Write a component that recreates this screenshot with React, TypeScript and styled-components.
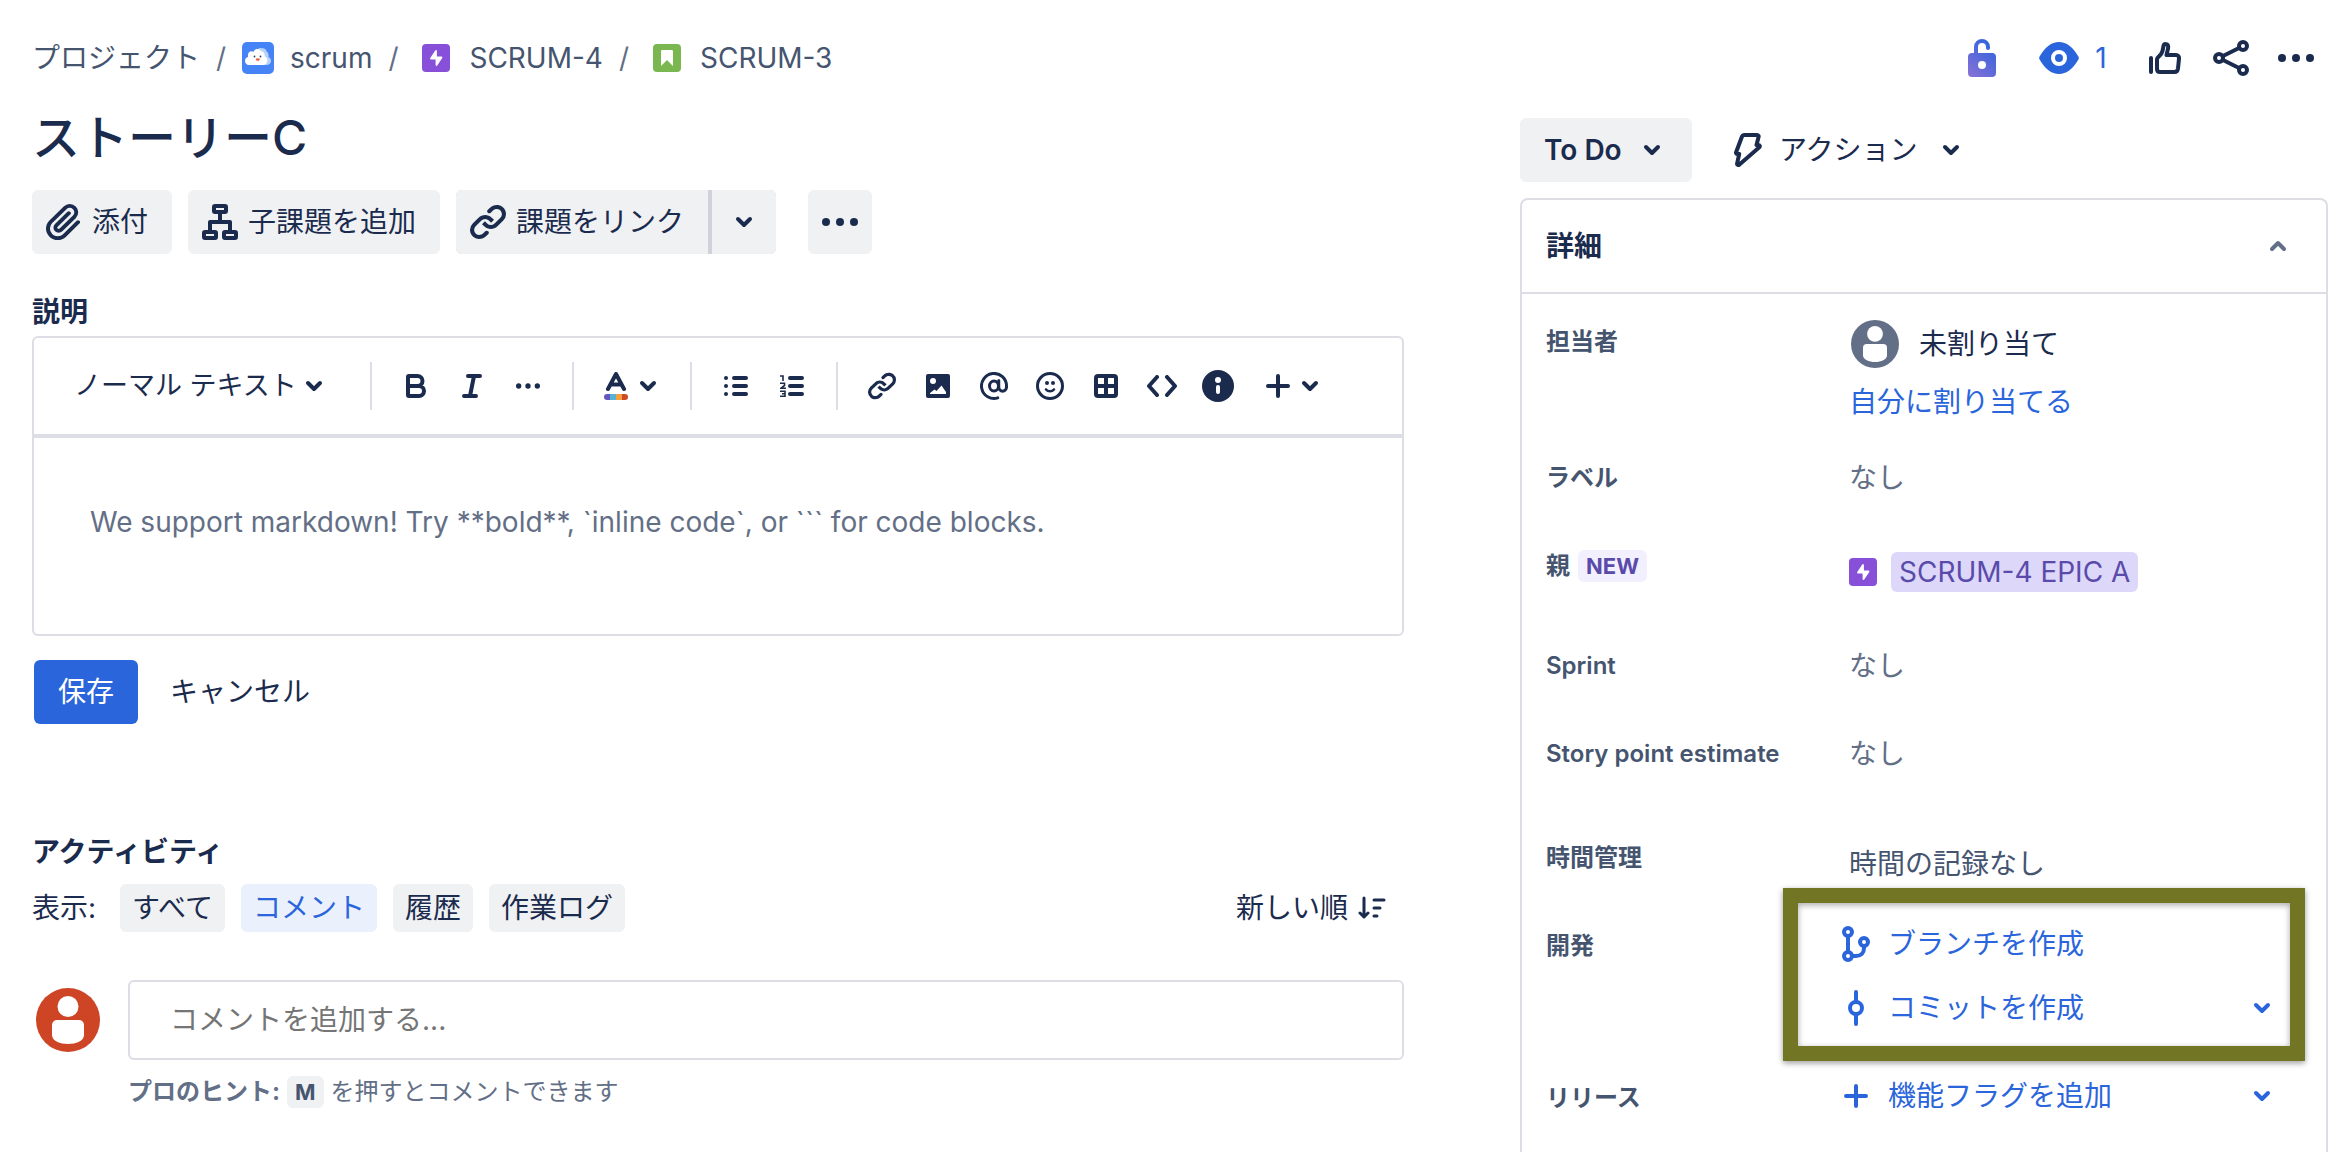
import React from "react";
import styled, { createGlobalStyle, css } from "styled-components";

const c = {
  navy: "#1b2b4e",
  slate: "#46556f",
  subtle: "#636f86",
  blue: "#2b65dc",
  blueSoft: "#eaf1fd",
  gray: "#f0f1f3",
  line: "#dddee5",
  purple: "#8850d8",
  olive: "#717524",
};

const Global = createGlobalStyle`
  *, *::before, *::after { box-sizing: border-box; }
  body {
    margin: 0;
    background: #fff;
    color: ${c.navy};
    font-family: Inter, "Noto Sans CJK JP", sans-serif;
    font-size: 28px;
    line-height: 40px;
  }
  button, input, textarea, select { font: inherit; color: inherit; margin: 0; }
  button, select { cursor: pointer; }
  h1, h2, p, dl, dd, ol { margin: 0; padding: 0; }
  svg { display: block; flex: none; }
`;

/* ---------- layout ---------- */

const Page = styled.div`
  height: 100vh;
  overflow: hidden;
  padding: 26px 24px 0 32px;
  display: flex;
  flex-direction: column;
`;

const TopBar = styled.header`
  display: flex;
  align-items: center;
  justify-content: space-between;
  height: 64px;
`;

const Columns = styled.div`
  flex: 1;
  min-height: 0;
  display: grid;
  grid-template-columns: minmax(0, 1fr) 808px;
  column-gap: 116px;
`;

const Main = styled.main`
  display: flex;
  flex-direction: column;
  padding-top: 16px;
`;

const Side = styled.aside`
  display: flex;
  flex-direction: column;
  padding-top: 28px;
  min-height: 0;
`;

/* ---------- top bar ---------- */

const Crumbs = styled.ol`
  display: flex;
  align-items: center;
  list-style: none;
  color: ${c.slate};
`;

const Crumb = styled.li`
  display: flex;
  align-items: center;
  & + &::before {
    content: "/";
    width: 42px;
    text-align: center;
    color: ${c.subtle};
  }
`;

const CrumbLink = styled.a<{ $issue?: boolean }>`
  display: flex;
  align-items: center;
  gap: ${(p) => (p.$issue ? 19 : 16)}px;
  padding-left: ${(p) => (p.$issue ? 8 : 0)}px;
  color: inherit;
  text-decoration: none;
`;

const Tools = styled.div`
  display: flex;
  align-items: center;
`;

const ToolButton = styled.button<{ $active?: boolean; $width?: number }>`
  display: flex;
  align-items: center;
  justify-content: center;
  gap: 16px;
  width: ${(p) => p.$width ?? 64}px;
  height: 64px;
  padding: 0;
  border: 0;
  background: none;
  color: ${(p) => (p.$active ? c.blue : c.navy)};
`;

/* ---------- main column ---------- */

const Title = styled.h1`
  font-size: 48px;
  line-height: 64px;
  font-weight: 500;
`;

const ActionRow = styled.div`
  display: flex;
  gap: 16px;
  margin-top: 20px;
`;

const buttonBase = css`
  display: flex;
  align-items: center;
  height: 64px;
  border: 0;
  border-radius: 6px;
`;

const GrayButton = styled.button`
  ${buttonBase}
  gap: 10px;
  padding: 0 24px 0 14px;
  background: ${c.gray};
`;

const SquareButton = styled.button`
  ${buttonBase}
  justify-content: center;
  width: 64px;
  padding: 0;
  background: ${c.gray};
`;

const SplitGroup = styled.div`
  display: flex;
  gap: 4px;
  margin-right: 16px;
  border-radius: 6px;
  overflow: hidden;
  background: #cfd1db;
  > button { border-radius: 0; }
`;

const SectionTitle = styled.h2`
  font-size: 28px;
  line-height: 40px;
  font-weight: 700;
`;

const DescriptionTitle = styled(SectionTitle)`
  margin: 38px 0 4px;
`;

const Editor = styled.div`
  border: 2px solid ${c.line};
  border-radius: 6px;
`;

const Toolbar = styled.div`
  display: flex;
  align-items: center;
  height: 100px;
  padding-left: 40px;
  border-bottom: 4px solid ${c.line};
`;

const EditorButton = styled.button`
  display: flex;
  align-items: center;
  justify-content: center;
  width: 56px;
  height: 56px;
  padding: 0;
  border: 0;
  background: none;
`;

const EditorMenu = styled.button<{ $start: number }>`
  display: flex;
  align-items: center;
  height: 56px;
  padding: 0 10px 0 ${(p) => p.$start}px;
  border: 0;
  background: none;
`;

const IconSlot = styled.span`
  display: flex;
  align-items: center;
  justify-content: center;
  width: 32px;
  height: 32px;
  flex: none;
`;

const Separator = styled.span`
  width: 2px;
  height: 48px;
  margin: 0 16px;
  background: ${c.line};
`;

/* A native select with its arrow stacked in the same grid cell */
const SelectBox = styled.label`
  display: grid;
  align-items: center;
  justify-items: end;
  > * { grid-area: 1 / 1; }
  > svg { pointer-events: none; margin-right: 24px; }
`;

const StyleSelect = styled.select`
  appearance: none;
  width: 280px;
  height: 56px;
  padding: 0;
  border: 0;
  background: none;
  font-size: 27px;
`;

const StatusSelect = styled.select`
  appearance: none;
  width: 172px;
  height: 64px;
  padding: 0 0 0 24px;
  border: 0;
  border-radius: 6px;
  background: ${c.gray};
  font-weight: 600;
`;

const Description = styled.textarea`
  display: block;
  width: 100%;
  height: 196px;
  padding: 64px 56px;
  border: 0;
  outline: 0;
  resize: none;
  background: none;
  line-height: 40px;
  &::placeholder { color: ${c.subtle}; opacity: 1; }
`;

const FormButtons = styled.div`
  display: flex;
  gap: 8px;
  margin: 24px 0 0 2px;
`;

const FormButton = styled.button<{ $primary?: boolean }>`
  ${buttonBase}
  padding: 0 24px;
  background: ${(p) => (p.$primary ? c.blue : "none")};
  color: ${(p) => (p.$primary ? "#fff" : c.navy)};
`;

const ActivityTitle = styled(SectionTitle)`
  margin-top: 108px;
`;

const FilterRow = styled.div`
  display: flex;
  align-items: center;
  gap: 16px;
  margin-top: 12px;
`;

const FilterLabel = styled.span`
  margin-right: 8px;
`;

const Filter = styled.button<{ $on?: boolean }>`
  height: 48px;
  padding: 0 12px;
  border: 0;
  border-radius: 6px;
  background: ${(p) => (p.$on ? c.blueSoft : c.gray)};
  color: ${(p) => (p.$on ? c.blue : c.navy)};
`;

const SortButton = styled.button`
  display: flex;
  align-items: center;
  gap: 10px;
  height: 48px;
  margin-left: auto;
  padding: 0 18px 0 0;
  border: 0;
  background: none;
`;

const CommentRow = styled.div`
  display: grid;
  grid-template-columns: 64px minmax(0, 1fr);
  column-gap: 28px;
  align-items: center;
  margin-top: 48px;
  padding-left: 4px;
`;

const CommentInput = styled.input`
  width: 100%;
  height: 80px;
  padding: 0 40px;
  border: 2px solid ${c.line};
  border-radius: 6px;
  outline: 0;
  &::placeholder { color: #757575; opacity: 1; }
`;

const Hint = styled.p`
  grid-column: 2;
  display: flex;
  align-items: center;
  gap: 7px;
  margin-top: 16px;
  font-size: 24px;
  line-height: 32px;
  color: ${c.subtle};
`;

const Key = styled.kbd`
  padding: 0 8px;
  border-radius: 6px;
  background: ${c.gray};
  color: ${c.slate};
  font-family: inherit;
  font-size: 22px;
  font-weight: 700;
`;

/* ---------- side column ---------- */

const StatusRow = styled.div`
  display: flex;
  align-items: center;
  gap: 26px;
`;

const PlainButton = styled.button`
  ${buttonBase}
  gap: 17px;
  padding: 0 16px;
  background: none;
`;

const Panel = styled.section`
  flex: 1;
  min-height: 0;
  margin-top: 16px;
  border: 2px solid ${c.line};
  border-bottom: 0;
  border-radius: 8px 8px 0 0;
`;

const PanelHeader = styled.button`
  display: flex;
  align-items: center;
  justify-content: space-between;
  width: 100%;
  height: 94px;
  padding: 0 32px 0 24px;
  border: 0;
  border-bottom: 2px solid ${c.line};
  background: none;
  font-weight: 700;
  > svg { color: ${c.subtle}; }
`;

const Fields = styled.dl`
  display: flex;
  flex-direction: column;
  gap: 32px;
  padding: 26px 48px 0 24px;
`;

const Field = styled.div<{ $min?: number }>`
  display: grid;
  grid-template-columns: 303px minmax(0, 1fr);
  align-items: start;
  min-height: ${(p) => p.$min ?? 56}px;
`;

const FieldName = styled.dt`
  display: flex;
  align-items: center;
  gap: 8px;
  font-size: 24px;
  line-height: 44px;
  font-weight: 600;
  color: ${c.slate};
`;

const FieldValue = styled.dd<{ $tone?: string; $tall?: boolean }>`
  position: relative;
  line-height: ${(p) => (p.$tall ? 56 : 44)}px;
  color: ${(p) => p.$tone ?? c.navy};
`;

const Person = styled.div`
  display: flex;
  align-items: center;
  gap: 20px;
  height: 48px;
  padding-left: 2px;
`;

const AssignLink = styled.a`
  display: block;
  margin-top: 12px;
  color: ${c.blue};
  text-decoration: none;
`;

const NewBadge = styled.span`
  padding: 0 8px;
  border-radius: 6px;
  background: #f2f0fe;
  color: #5a4bab;
  font-size: 22px;
  line-height: 32px;
  font-weight: 700;
`;

const EpicLink = styled.a`
  display: flex;
  align-items: center;
  gap: 14px;
  height: 56px;
  text-decoration: none;
  color: #5a4bab;
  line-height: 40px;
  > span { padding: 0 8px; border-radius: 6px; background: #ddd8f9; }
`;

const DevActions = styled.div`
  display: flex;
  flex-direction: column;
  gap: 24px;
  margin-left: -9px;
`;

const DevAction = styled.button`
  display: flex;
  align-items: center;
  gap: 16px;
  width: 100%;
  height: 40px;
  padding: 0;
  border: 0;
  background: none;
  color: ${c.blue};
  > svg:last-child { margin-left: auto; }
`;

/* Frame laid over the development actions to call them out */
const Callout = styled.div`
  position: absolute;
  top: -36px;
  left: -66px;
  right: -27px;
  height: 173px;
  border: 15px solid ${c.olive};
  box-shadow: 0 2px 6px rgba(0, 0, 0, 0.4), inset 0 2px 6px rgba(0, 0, 0, 0.35);
  pointer-events: none;
`;

/* ---------- icons ---------- */

type SvgProps = { w: number; h: number; box?: string; children: React.ReactNode };
const Svg = ({ w, h, box, children }: SvgProps) => (
  <svg width={w} height={h} viewBox={box ?? `0 0 ${w} ${h}`} fill="none" aria-hidden="true">
    {children}
  </svg>
);

const line = {
  stroke: "currentColor",
  strokeWidth: 4,
  strokeLinecap: "round" as const,
  strokeLinejoin: "round" as const,
};

const Chevron = ({ up }: { up?: boolean }) => (
  <Svg w={32} h={32}>
    <path d={up ? "M10 19l6-6 6 6" : "M10 13l6 6 6-6"} {...line} />
  </Svg>
);

const Dots = ({ small }: { small?: boolean }) => (
  <Svg w={small ? 24 : 36} h={small ? 6 : 8} box="0 0 36 8">
    <g fill="currentColor">
      <circle cx="4" cy="4" r="4" />
      <circle cx="18" cy="4" r="4" />
      <circle cx="32" cy="4" r="4" />
    </g>
  </Svg>
);

const Paperclip = () => (
  <Svg w={36} h={36} box="3 3 18 18">
    <path
      fill="currentColor"
      d="M11.643 17.965c-1.53 1.495-4.016 1.496-5.542.004a3.773 3.773 0 01.002-5.412l7.147-6.985a2.316 2.316 0 013.233-.003c.893.873.895 2.282.004 3.153l-6.703 6.55a.653.653 0 01-.914-.008.62.62 0 010-.902l6.229-6.087a.941.941 0 000-1.353.995.995 0 00-1.384 0l-6.23 6.087a2.502 2.502 0 000 3.607 2.643 2.643 0 003.683.009l6.703-6.55a4.074 4.074 0 00-.003-5.859 4.306 4.306 0 00-6.002.003l-7.148 6.985a5.655 5.655 0 00-.001 8.118c2.29 2.237 6.015 2.238 8.308-.004l6.682-6.53a.94.94 0 000-1.353.996.996 0 00-1.384 0l-6.681 6.53z"
    />
  </Svg>
);

const Tree = () => (
  <Svg w={36} h={36}>
    <g stroke="currentColor" strokeWidth="4">
      <rect x="12" y="2" width="12" height="6" rx="1" />
      <rect x="2" y="28" width="12" height="6" rx="1" />
      <rect x="22" y="28" width="12" height="6" rx="1" />
      <path d="M18 9v9M8 27v-9h20v9" strokeLinejoin="round" />
    </g>
  </Svg>
);

const LinkIcon = ({ size }: { size: number }) => (
  <Svg w={size} h={size} box="3 3.500 18 18">
    <g fill="currentColor">
      <path d="M12.856 5.457l-.937.92a1.002 1.002 0 000 1.437 1.047 1.047 0 001.463 0l.984-.966c.967-.95 2.542-1.135 3.602-.288a2.54 2.54 0 01.203 3.81l-2.903 2.852a2.646 2.646 0 01-3.696 0l-1.11-1.09L9 13.57l1.108 1.089c1.822 1.788 4.802 1.788 6.622 0l2.905-2.852a4.558 4.558 0 00-.357-6.82c-1.893-1.517-4.695-1.226-6.422.47" />
      <path d="M11.144 19.543l.937-.92a1.002 1.002 0 000-1.437 1.047 1.047 0 00-1.462 0l-.985.966c-.967.95-2.542 1.135-3.602.288a2.54 2.54 0 01-.203-3.81l2.903-2.852a2.646 2.646 0 013.696 0l1.11 1.09L15 11.43l-1.108-1.089c-1.822-1.788-4.802-1.788-6.622 0l-2.905 2.852a4.558 4.558 0 00.357 6.82c1.893 1.517 4.695 1.226 6.422-.47" />
    </g>
  </Svg>
);

const ProjectAvatar = () => (
  <Svg w={32} h={32}>
    <rect width="32" height="32" rx="5" fill="#4583f6" />
    <path
      d="M12 23h13c2.500 0 4-2 4-4.200 0-2-1-3.400-2.600-3.900 .6-2.500-.3-4.500-1.800-5.400C24 7 22 6 20 6.300c-2-1-4.500 0-5 2z"
      fill="#b9d2fc"
    />
    <path
      d="M7 23c-2.500 0-4-1.700-4-4 0-2.100 1.200-3.600 3-4-.6-3 1-5.700 3.400-5.700.8 0 1.400.2 2 .6C12.200 8 13.600 7 15.400 7c1.700 0 3 1 3.600 2.300 2.400 0 4 2 3.700 5 1.600.6 2.600 2.200 2.600 4.300 0 2.600-1.600 4.400-4 4.400z"
      fill="#fff"
    />
    <circle cx="12.500" cy="14.500" r="0.900" fill="#2b3f63" />
    <circle cx="18.500" cy="14.500" r="0.900" fill="#2b3f63" />
    <path d="M13.800 16.500h4c0 1.400-.8 2.300-2 2.300s-2-.9-2-2.300z" fill="#f0553a" />
  </Svg>
);

const EpicIcon = () => (
  <Svg w={28} h={28}>
    <rect width="28" height="28" rx="4" fill={c.purple} />
    <path
      d="M14 7v6.500h5.500L14.500 21v-6.500H9z"
      fill="#fff"
      stroke="#fff"
      strokeWidth="1.800"
      strokeLinejoin="round"
    />
  </Svg>
);

const StoryIcon = () => (
  <Svg w={28} h={28}>
    <rect width="28" height="28" rx="4" fill="#7bb750" />
    <path d="M8 7.500c0-1 .5-1.500 1.500-1.500h9c1 0 1.500.5 1.500 1.500V22l-6-6-6 6z" fill="#fff" />
  </Svg>
);

const LockIcon = () => (
  <Svg w={28} h={38}>
    <defs>
      <linearGradient id="lock" x1="0" y1="38" x2="28" y2="6" gradientUnits="userSpaceOnUse">
        <stop offset="0" stopColor="#8a72d6" />
        <stop offset="1" stopColor="#2e63dc" />
      </linearGradient>
    </defs>
    <path d="M8 15V8a6 6 0 0112 0v1" stroke="url(#lock)" strokeWidth="4" strokeLinecap="round" />
    <path
      fillRule="evenodd"
      d="M4 14h20a4 4 0 014 4v16a4 4 0 01-4 4H4a4 4 0 01-4-4V18a4 4 0 014-4zm10 8a4 4 0 100 8 4 4 0 000-8z"
      fill="url(#lock)"
    />
  </Svg>
);

const EyeIcon = () => (
  <Svg w={40} h={32}>
    <path
      d="M.6 14.500C6 5 12.500 0 20 0s14 5 19.400 14.500c.6 1 .6 2 0 3C34 27 27.500 32 20 32S6 27 .6 17.500c-.6-1-.6-2 0-3z"
      fill="currentColor"
    />
    <circle cx="20" cy="16" r="6" stroke="#fff" strokeWidth="4" />
  </Svg>
);

const ThumbIcon = () => (
  <Svg w={32} h={32}>
    <path d="M2 16v14" {...line} />
    <path
      d="M8 17c0-2 4.500-3.500 5.500-8l1-5c.5-2.600 4.500-2.600 4.700.6.1 3-1.200 5.400-1.700 8.400H27c2 0 3.200 1.500 3 3.500l-1 10c-.3 2.300-1.500 3.500-3.500 3.500H11c-2 0-3-1-3-3z"
      {...line}
    />
  </Svg>
);

const ShareIcon = () => (
  <Svg w={36} h={36}>
    <g {...line}>
      <circle cx="6" cy="18" r="4" />
      <circle cx="30" cy="6" r="4" />
      <circle cx="30" cy="30" r="4" />
      <path d="M10 16l16-8M10 20l16 8" />
    </g>
  </Svg>
);

const ActionBolt = () => (
  <Svg w={28} h={34}>
    <path
      d="M10 2h13c1.500 0 2 1 1.500 2.300L22.500 12h1.800c1.500 0 2 1.300 1 2.300L5.500 31.500c-1.300 1.200-2.800.2-2.300-1.300l2-9.200H3.500c-1.200 0-1.800-1-1.300-2L8 3.500C8.400 2.500 9 2 10 2z"
      {...line}
    />
  </Svg>
);

const BoldIcon = () => (
  <Svg w={22} h={24}>
    <path d="M3 12h11a5 5 0 010 10H4a1 1 0 01-1-1V3a1 1 0 011-1h8.500a5 5 0 010 10" {...line} />
  </Svg>
);

const ItalicIcon = () => (
  <Svg w={20} h={24}>
    <path d="M6 2h12M2 22h12M12 2L8 22" {...line} />
  </Svg>
);

const ColorIcon = () => (
  <Svg w={24} h={28}>
    <path d="M4 17l8-15 8 15M7 12.500h10" {...line} />
    <path d="M3 22h3v6H3a3 3 0 010-6z" fill="#6656bd" />
    <path d="M6 22h6v6H6z" fill="#57b3d6" />
    <path d="M12 22h6v6h-6z" fill="#f2a040" />
    <path d="M18 22h3a3 3 0 010 6h-3z" fill="#cc4a24" />
  </Svg>
);

const BulletIcon = () => (
  <Svg w={24} h={20}>
    <path d="M2 2h.01M2 10h.01M2 18h.01M10 2h12M10 10h12M10 18h12" {...line} />
  </Svg>
);

const NumberIcon = () => (
  <Svg w={24} h={24}>
    <path d="M10 4h12M10 12h12M10 20h12" {...line} />
    <path
      d="M0 2h3v5M0 9.300h4.500v2.200L1 14.200h5M0 17.300h5v5H0M2 19.800h3"
      stroke="currentColor"
      strokeWidth="1.600"
    />
  </Svg>
);

const ImageIcon = () => (
  <Svg w={24} h={24}>
    <rect width="24" height="24" rx="2" fill="currentColor" />
    <circle cx="7" cy="7" r="3" fill="#fff" />
    <path d="M4 20v-1l4.500-3.500 2 1.500 5-5.500L20 18v2z" fill="#fff" />
  </Svg>
);

const MentionIcon = () => (
  <Svg w={28} h={28} box="0.800 0.800 22.400 22.400">
    <g stroke="currentColor" strokeWidth="2.400" strokeLinecap="round">
      <ellipse cx="12" cy="12" rx="3.600" ry="4" />
      <path d="M15.800 7.500V13a3 3 0 006.200 0v-1a10 10 0 10-7 9.500" />
    </g>
  </Svg>
);

const SmileIcon = () => (
  <Svg w={28} h={28}>
    <circle cx="14" cy="14" r="12.500" stroke="currentColor" strokeWidth="3" />
    <circle cx="11" cy="11" r="2" fill="currentColor" />
    <circle cx="17" cy="11" r="2" fill="currentColor" />
    <path d="M10 17.500c2 2.300 6 2.300 8 0" {...line} strokeWidth={2.600} />
  </Svg>
);

const TableIcon = () => (
  <Svg w={24} h={24}>
    <rect width="24" height="24" rx="4" fill="currentColor" />
    <path d="M4 4h6v6H4zM14 4h6v6h-6zM4 14h6v6H4zM14 14h6v6h-6z" fill="#fff" />
  </Svg>
);

const CodeIcon = () => (
  <Svg w={30} h={22}>
    <path d="M10 2l-8 9 8 9M20 2l8 9-8 9" {...line} />
  </Svg>
);

const InfoIcon = () => (
  <Svg w={32} h={32}>
    <circle cx="16" cy="16" r="16" fill="currentColor" />
    <circle cx="16" cy="10" r="3" fill="#fff" />
    <rect x="14" y="15" width="4" height="9" rx="2" fill="#fff" />
  </Svg>
);

const PlusIcon = () => (
  <Svg w={24} h={24}>
    <path d="M12 2v20M2 12h20" {...line} />
  </Svg>
);

const SortIcon = () => (
  <Svg w={28} h={24}>
    <g {...line} strokeWidth={3}>
      <path d="M6 2v19M2 17l4 4 4-4" />
      <path d="M16 4h10M16 12h6M16 20h3" />
    </g>
  </Svg>
);

const BranchIcon = () => (
  <Svg w={28} h={36}>
    <g {...line}>
      <circle cx="6" cy="6" r="4" />
      <circle cx="6" cy="30" r="4" />
      <circle cx="22" cy="16" r="4" />
      <path d="M6 10v16M22 20v2c0 5-3 8-8 8h-4" />
    </g>
  </Svg>
);

const CommitIcon = () => (
  <Svg w={18} h={36}>
    <g {...line}>
      <circle cx="9" cy="18" r="6" />
      <path d="M9 2v10M9 24v10" />
    </g>
  </Svg>
);

const Avatar = ({ size, color }: { size: number; color: string }) => (
  <Svg w={size} h={size} box="0 0 64 64">
    <circle cx="32" cy="32" r="32" fill={color} />
    <circle cx="32" cy="18.500" r="10.500" fill="#fff" />
    <path d="M16 37a5 5 0 015-5h22a5 5 0 015 5v10c0 6-8 9-16 9s-16-3-16-9z" fill="#fff" />
  </Svg>
);

/* ---------- page ---------- */

const insertTools: [string, React.ReactNode][] = [
  ["リンク", <LinkIcon size={28} />],
  ["画像", <ImageIcon />],
  ["メンション", <MentionIcon />],
  ["絵文字", <SmileIcon />],
  ["表", <TableIcon />],
  ["コード", <CodeIcon />],
  ["情報パネル", <InfoIcon />],
];

const filters = ["すべて", "コメント", "履歴", "作業ログ"];

export default function App() {
  return (
    <>
      <Global />
      <Page>
        <TopBar>
          <nav>
            <Crumbs>
              <Crumb>
                <CrumbLink href="#">プロジェクト</CrumbLink>
              </Crumb>
              <Crumb>
                <CrumbLink href="#">
                  <ProjectAvatar />
                  scrum
                </CrumbLink>
              </Crumb>
              <Crumb>
                <CrumbLink href="#" $issue>
                  <EpicIcon />
                  <span>SCRUM-4</span>
                </CrumbLink>
              </Crumb>
              <Crumb>
                <CrumbLink href="#" $issue>
                  <StoryIcon />
                  <span>SCRUM-3</span>
                </CrumbLink>
              </Crumb>
            </Crumbs>
          </nav>
          <Tools>
            <ToolButton aria-label="ロック解除">
              <LockIcon />
            </ToolButton>
            <ToolButton $active $width={118} aria-label="ウォッチ 1">
              <EyeIcon />1
            </ToolButton>
            <ToolButton $width={66} aria-label="いいね">
              <ThumbIcon />
            </ToolButton>
            <ToolButton $width={66} aria-label="共有">
              <ShareIcon />
            </ToolButton>
            <ToolButton aria-label="その他">
              <Dots />
            </ToolButton>
          </Tools>
        </TopBar>

        <Columns>
          <Main>
            <Title>ストーリーC</Title>
            <ActionRow>
              <GrayButton>
                <Paperclip />
                添付
              </GrayButton>
              <GrayButton>
                <Tree />
                子課題を追加
              </GrayButton>
              <SplitGroup>
                <GrayButton>
                  <LinkIcon size={36} />
                  課題をリンク
                </GrayButton>
                <SquareButton aria-label="リンクの種類">
                  <Chevron />
                </SquareButton>
              </SplitGroup>
              <SquareButton aria-label="その他の操作">
                <Dots />
              </SquareButton>
            </ActionRow>

            <DescriptionTitle>説明</DescriptionTitle>
            <Editor>
              <Toolbar>
                <SelectBox>
                  <StyleSelect aria-label="テキストスタイル">
                    <option>ノーマル テキスト</option>
                  </StyleSelect>
                  <Chevron />
                </SelectBox>
                <Separator />
                <EditorButton aria-label="太字">
                  <BoldIcon />
                </EditorButton>
                <EditorButton aria-label="斜体">
                  <ItalicIcon />
                </EditorButton>
                <EditorButton aria-label="その他の書式">
                  <Dots small />
                </EditorButton>
                <Separator />
                <EditorMenu $start={10} aria-label="文字色">
                  <IconSlot>
                    <ColorIcon />
                  </IconSlot>
                  <Chevron />
                </EditorMenu>
                <Separator />
                <EditorButton aria-label="箇条書き">
                  <BulletIcon />
                </EditorButton>
                <EditorButton aria-label="番号付きリスト">
                  <NumberIcon />
                </EditorButton>
                <Separator />
                {insertTools.map(([name, icon]) => (
                  <EditorButton key={name} aria-label={name}>
                    {icon}
                  </EditorButton>
                ))}
                <EditorMenu $start={16} aria-label="挿入">
                  <IconSlot>
                    <PlusIcon />
                  </IconSlot>
                  <Chevron />
                </EditorMenu>
              </Toolbar>
              <Description
                aria-label="説明"
                placeholder="We support markdown! Try **bold**, `inline code`, or ``` for code blocks."
              />
            </Editor>
            <FormButtons>
              <FormButton $primary>保存</FormButton>
              <FormButton>キャンセル</FormButton>
            </FormButtons>

            <ActivityTitle>アクティビティ</ActivityTitle>
            <FilterRow>
              <FilterLabel>表示:</FilterLabel>
              {filters.map((name) => (
                <Filter key={name} $on={name === "コメント"}>
                  {name}
                </Filter>
              ))}
              <SortButton>
                新しい順
                <SortIcon />
              </SortButton>
            </FilterRow>

            <CommentRow>
              <Avatar size={64} color="#cd4524" />
              <CommentInput aria-label="コメント" placeholder="コメントを追加する..." />
              <Hint>
                <b>プロのヒント:</b>
                <Key>M</Key>
                <span>を押すとコメントできます</span>
              </Hint>
            </CommentRow>
          </Main>

          <Side>
            <StatusRow>
              <SelectBox>
                <StatusSelect aria-label="ステータス">
                  <option>To Do</option>
                </StatusSelect>
                <Chevron />
              </SelectBox>
              <PlainButton>
                <ActionBolt />
                アクション
                <Chevron />
              </PlainButton>
            </StatusRow>

            <Panel>
              <PanelHeader aria-expanded="true">
                詳細
                <Chevron up />
              </PanelHeader>
              <Fields>
                <Field>
                  <FieldName>担当者</FieldName>
                  <FieldValue>
                    <Person>
                      <Avatar size={48} color={c.subtle} />
                      未割り当て
                    </Person>
                    <AssignLink href="#">自分に割り当てる</AssignLink>
                  </FieldValue>
                </Field>
                <Field>
                  <FieldName>ラベル</FieldName>
                  <FieldValue $tone={c.subtle}>なし</FieldValue>
                </Field>
                <Field $min={68}>
                  <FieldName>
                    親<NewBadge>NEW</NewBadge>
                  </FieldName>
                  <FieldValue>
                    <EpicLink href="#">
                      <EpicIcon />
                      <span>SCRUM-4 EPIC A</span>
                    </EpicLink>
                  </FieldValue>
                </Field>
                <Field>
                  <FieldName>Sprint</FieldName>
                  <FieldValue $tone={c.subtle}>なし</FieldValue>
                </Field>
                <Field $min={72}>
                  <FieldName>Story point estimate</FieldName>
                  <FieldValue $tone={c.subtle}>なし</FieldValue>
                </Field>
                <Field>
                  <FieldName>時間管理</FieldName>
                  <FieldValue $tone={c.slate} $tall>
                    時間の記録なし
                  </FieldValue>
                </Field>
                <Field $min={120}>
                  <FieldName>開発</FieldName>
                  <FieldValue>
                    <DevActions>
                      <DevAction>
                        <IconSlot>
                          <BranchIcon />
                        </IconSlot>
                        ブランチを作成
                      </DevAction>
                      <DevAction>
                        <IconSlot>
                          <CommitIcon />
                        </IconSlot>
                        コミットを作成
                        <Chevron />
                      </DevAction>
                    </DevActions>
                    <Callout />
                  </FieldValue>
                </Field>
                <Field>
                  <FieldName>リリース</FieldName>
                  <FieldValue>
                    <DevActions>
                      <DevAction>
                        <IconSlot>
                          <PlusIcon />
                        </IconSlot>
                        機能フラグを追加
                        <Chevron />
                      </DevAction>
                    </DevActions>
                  </FieldValue>
                </Field>
              </Fields>
            </Panel>
          </Side>
        </Columns>
      </Page>
    </>
  );
}
